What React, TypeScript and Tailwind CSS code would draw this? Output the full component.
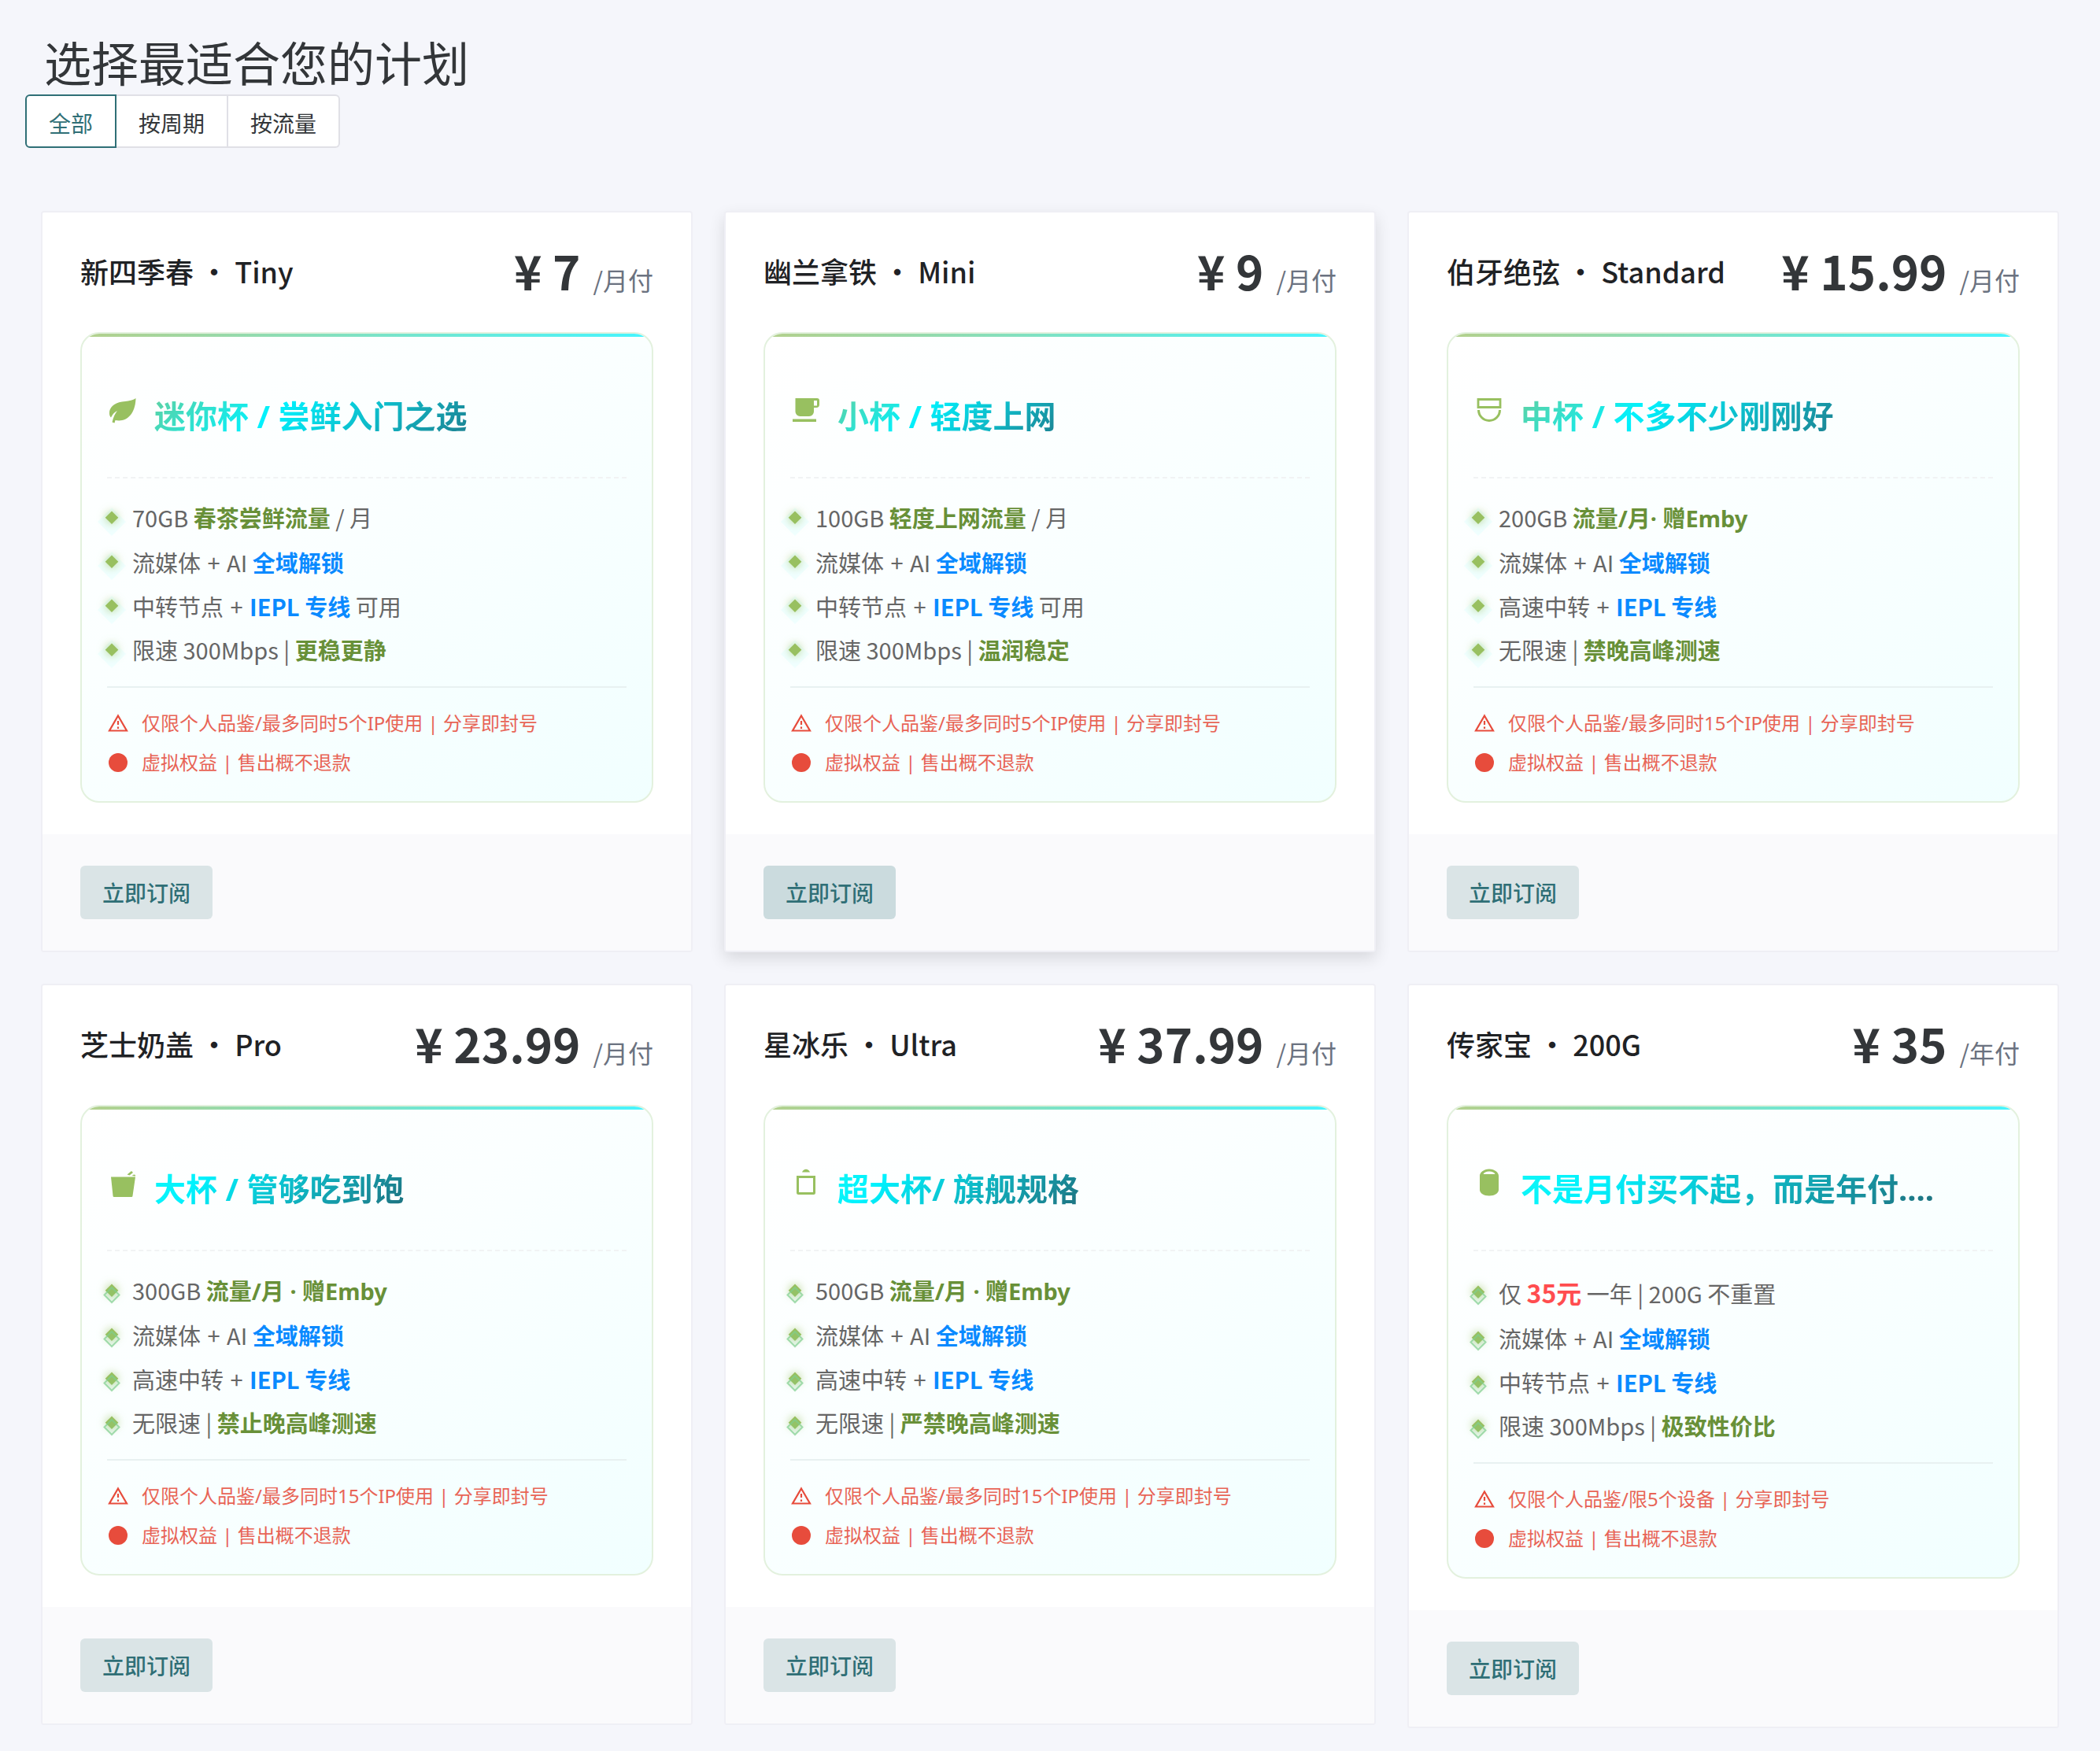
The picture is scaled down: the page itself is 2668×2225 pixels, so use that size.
import React, { useState } from 'react';

type Plan = {
  name: string;
  price: string;
  cycle: string;
  icon: string;
  slogan: string;
  features: React.ReactNode[];
  limit: string;
  titleBg: string;
  layered?: boolean;
  active?: boolean;
  tallFirst?: boolean;
};

const Green = ({ children }: { children: React.ReactNode }) => (
  <strong className="font-['Noto_Sans','Noto_Sans_CJK_SC',sans-serif] font-bold text-[#689038]">{children}</strong>
);
const Blue = ({ children }: { children: React.ReactNode }) => (
  <strong className="font-bold text-[#0a8aff]">{children}</strong>
);
const Plus = () => <span className="mx-0.5">+</span>;

const media = <>流媒体 <Plus /> AI <Blue>全域解锁</Blue></>;
const relay = <>中转节点 <Plus /> <Blue>IEPL 专线</Blue></>;
const fastRelay = <>高速中转 <Plus /> <Blue>IEPL 专线</Blue></>;

const early = 'bg-[linear-gradient(135deg,#62d0a0_0%,#00f2fe_38%,#1d8090_100%)]';
const late = 'bg-[linear-gradient(135deg,#12f6f6_0%,#00f2fe_20%,#1f6f7d_100%)]';

const plans: Plan[] = [
  {
    name: '新四季春 ・ Tiny',
    price: '7',
    cycle: '月付',
    icon: 'leaf',
    slogan: '迷你杯 / 尝鲜入门之选',
    features: [<>70GB <Green>春茶尝鲜流量</Green> / 月</>, media, <>{relay} 可用</>, <>限速 300Mbps | <Green>更稳更静</Green></>],
    limit: '最多同时5个IP使用',
    titleBg: early,
  },
  {
    name: '幽兰拿铁 ・ Mini',
    price: '9',
    cycle: '月付',
    icon: 'cup',
    slogan: '小杯 / 轻度上网',
    features: [<>100GB <Green>轻度上网流量</Green> / 月</>, media, <>{relay} 可用</>, <>限速 300Mbps | <Green>温润稳定</Green></>],
    limit: '最多同时5个IP使用',
    titleBg: early,
    active: true,
  },
  {
    name: '伯牙绝弦 ・ Standard',
    price: '15.99',
    cycle: '月付',
    icon: 'bowl',
    slogan: '中杯 / 不多不少刚刚好',
    features: [<>200GB <Green>流量/月· 赠Emby</Green></>, media, fastRelay, <>无限速 | <Green>禁晚高峰测速</Green></>],
    limit: '最多同时15个IP使用',
    titleBg: early,
  },
  {
    name: '芝士奶盖 ・ Pro',
    price: '23.99',
    cycle: '月付',
    icon: 'bucket',
    slogan: '大杯 / 管够吃到饱',
    features: [<>300GB <Green>流量/月 · 赠Emby</Green></>, media, fastRelay, <>无限速 | <Green>禁止晚高峰测速</Green></>],
    limit: '最多同时15个IP使用',
    titleBg: late,
    layered: true,
  },
  {
    name: '星冰乐 ・ Ultra',
    price: '37.99',
    cycle: '月付',
    icon: 'jar',
    slogan: '超大杯/ 旗舰规格',
    features: [<>500GB <Green>流量/月 · 赠Emby</Green></>, media, fastRelay, <>无限速 | <Green>严禁晚高峰测速</Green></>],
    limit: '最多同时15个IP使用',
    titleBg: late,
    layered: true,
  },
  {
    name: '传家宝 ・ 200G',
    price: '35',
    cycle: '年付',
    icon: 'can',
    slogan: '不是月付买不起，而是年付....',
    features: [
      <>仅 <strong className="text-[32px] font-bold text-[#ff4d4f]">35元</strong> 一年 | 200G 不重置</>,
      media,
      relay,
      <>限速 300Mbps | <Green>极致性价比</Green></>,
    ],
    limit: '限5个设备',
    titleBg: late,
    layered: true,
    tallFirst: true,
  },
];

const tabs = ['全部', '按周期', '按流量'];

function PlanIcon({ name }: { name: string }) {
  return (
    <svg viewBox="0 0 40 40" className="mb-4 size-10 shrink-0 text-[#98c060]" fill="currentColor" aria-hidden="true">
      {name === 'leaf' && (
        <path d="M36.500 5C33 7.500 28 8.500 19 9.500C8 11 2.500 18 3 24.500C3 27 4 28.500 5 29.500C7 25.500 9.500 22.500 13 21C10 25 8 29 6.500 35.500L9.500 36.500L10.500 33C25 36 36 25 36.500 5Z" />
      )}
      {name === 'cup' && (
        <path d="M6.500 5H34a3 3 0 0 1 3 3v5a4 4 0 0 1-4 4h-3v5a6 6 0 0 1-6 6H12.500a6 6 0 0 1-6-6V5ZM30 8v6.500h4V8h-4ZM3 31.500H33v3.500H3Z" fillRule="evenodd" />
      )}
      {name === 'bowl' && (
        <g fill="none" stroke="currentColor">
          <path d="M6 6.500H34V16.500H6Z" strokeWidth="2.800" />
          <path d="M6.500 20a13.500 13.500 0 0 0 27 0" strokeWidth="3" />
        </g>
      )}
      {name === 'bucket' && (
        <path d="M5 12.500H36L32.500 36.500a1.500 1.500 0 0 1-1.500 1.500H9a1.500 1.500 0 0 1-1.500-1.500ZM25.500 9.500L31 5l2 2-4.500 3.500ZM31.500 11l2.500-1.500 2 .5v1.500Z" />
      )}
      {name === 'jar' && (
        <>
          <path d="M9.500 12.500H30.500V32.500a1 1 0 0 1-1 1H10.500a1 1 0 0 1-1-1V12.500Z" fill="none" stroke="currentColor" strokeWidth="3" />
          <path d="M15 6.500C17 1.500 23 1.500 25 6.500Z" />
        </>
      )}
      {name === 'can' && (
        <path d="M20 2.500C13 2.500 8 7 8 11V29c0 4 5 7.500 12 7.500s12-3.500 12-7.500V11C32 7 27 2.500 20 2.500Zm0 3c4 0 6.500 1.500 7.500 3.500H12.500c1-2 3.500-3.500 7.500-3.500Z" fillRule="evenodd" />
      )}
    </svg>
  );
}

function Bullet({ layered }: { layered?: boolean }) {
  return (
    <svg viewBox="-6 -20 12 40" className="h-10 w-3 shrink-0 overflow-visible" aria-hidden="true">
      {!layered && <path d="M0 -13L18 5L0 23L-18 5Z" fill="#f0ffff" />}
      <path
        d="M0 -8.500L8.300 -.2L0 8.100L-8.300 -.2Z"
        fill="#98c060"
        className="drop-shadow-[0_0_6px_rgba(152,192,96,0.8)]"
      />
      {layered && (
        <path d="M0 -4L9.500 5.500L0 15L-9.500 5.500Z" fill="#7fcf8f" fillOpacity="0.15" stroke="#7fcf8f" strokeOpacity="0.7" strokeWidth="2" />
      )}
    </svg>
  );
}

function PlanCard({ plan }: { plan: Plan }) {
  return (
    <article
      className={`overflow-hidden rounded-[4px] border-2 border-[#efeff5] bg-white ${
        plan.active ? 'shadow-[0_8px_20px_rgba(0,0,0,0.12)]' : ''
      }`}
    >
      <div className="px-12 pt-10 pb-10">
        <header className="flex h-[68px] items-center justify-between">
          <h2 className="text-[36px] font-medium text-[#1f2225]">{plan.name}</h2>
          <p className="text-[#333639]">
            <span className="text-[60px] leading-[68px] font-bold">¥ {plan.price}</span>
            <span className="ml-4 text-[32px] text-[#6b7280]">/{plan.cycle}</span>
          </p>
        </header>
        <section className="relative mt-11 overflow-hidden rounded-[24px] border-2 border-[#e3f1de] bg-[linear-gradient(145deg,#ffffff_0%,#fbffff_40%,#f1ffff_100%)] px-8 pb-6">
          <div className="absolute inset-x-0 top-0 h-1 bg-[linear-gradient(90deg,#b4d08c,#45f5ff)]" />
          <div className="flex h-[184px] items-center gap-5 border-b-2 border-dashed border-[#f1f3f4] pt-7">
            <PlanIcon name={plan.icon} />
            <h3
              className={`bg-clip-text font-['Noto_Sans','Noto_Sans_CJK_SC',sans-serif] text-[40px] font-bold text-transparent ${plan.titleBg}`}
            >
              {plan.slogan}
            </h3>
          </div>
          <ul className="mt-[22px] border-b-2 border-[#e8f1f1] pb-[18px]">
            {plan.features.map((feature, i) => (
              <li
                key={i}
                className={`flex items-center gap-5 text-[29px] leading-[44px] text-[#666] ${plan.tallFirst && i === 0 ? 'h-15' : 'h-14'}`}
              >
                <Bullet layered={plan.layered} />
                <span>{feature}</span>
              </li>
            ))}
          </ul>
          <div className="pt-5 font-['Noto_Sans','Noto_Sans_CJK_SC',sans-serif] text-[24px] text-[#e86456]">
            <p className="flex h-[50px] items-center gap-4">
              <svg viewBox="0 0 28 28" className="size-7" fill="none" stroke="#e74c3c" strokeWidth="2.200" aria-hidden="true">
                <path d="M14 4.500L25 23.500H3ZM14 11v5M14 18.500v2.500" />
              </svg>
              仅限个人品鉴/{plan.limit} | 分享即封号
            </p>
            <p className="flex h-[50px] items-center gap-4">
              <svg viewBox="0 0 28 28" className="size-7" fill="#e74c3c" aria-hidden="true">
                <circle cx="14" cy="14" r="12" />
              </svg>
              虚拟权益 | 售出概不退款
            </p>
          </div>
        </section>
      </div>
      <footer className="bg-[#fafafc] px-12 py-10">
        <button
          type="button"
          className={`h-[68px] rounded-[6px] px-7 text-[28px] font-medium text-[#2f6f76] ${
            plan.active ? 'bg-[#cbdbde]' : 'bg-[#dae4e6]'
          }`}
        >
          立即订阅
        </button>
      </footer>
    </article>
  );
}

export default function App() {
  const [tab, setTab] = useState('全部');
  return (
    <main className="min-h-screen bg-[#f5f6fb] px-8 pt-10 pb-8 font-['Noto_Sans_CJK_SC','Noto_Sans',sans-serif]">
      <h1 className="px-6 pb-1 text-[60px] leading-[76px] text-[#333639]">选择最适合您的计划</h1>
      <nav className="flex">
        {tabs.map((t) => (
          <button
            key={t}
            type="button"
            onClick={() => setTab(t)}
            className={`h-[68px] border-2 bg-white px-7 pt-1 text-[28px] ${
              t === tab ? 'border-[#2f6f76] text-[#2f6f76]' : 'border-l-0 border-[#e0e0e6] text-[#333639]'
            } first:rounded-l-[6px] last:rounded-r-[6px]`}
          >
            {t}
          </button>
        ))}
      </nav>
      <div className="mt-20 grid grid-cols-3 items-start gap-10 px-5">
        {plans.map((plan) => (
          <PlanCard key={plan.name} plan={plan} />
        ))}
      </div>
    </main>
  );
}
